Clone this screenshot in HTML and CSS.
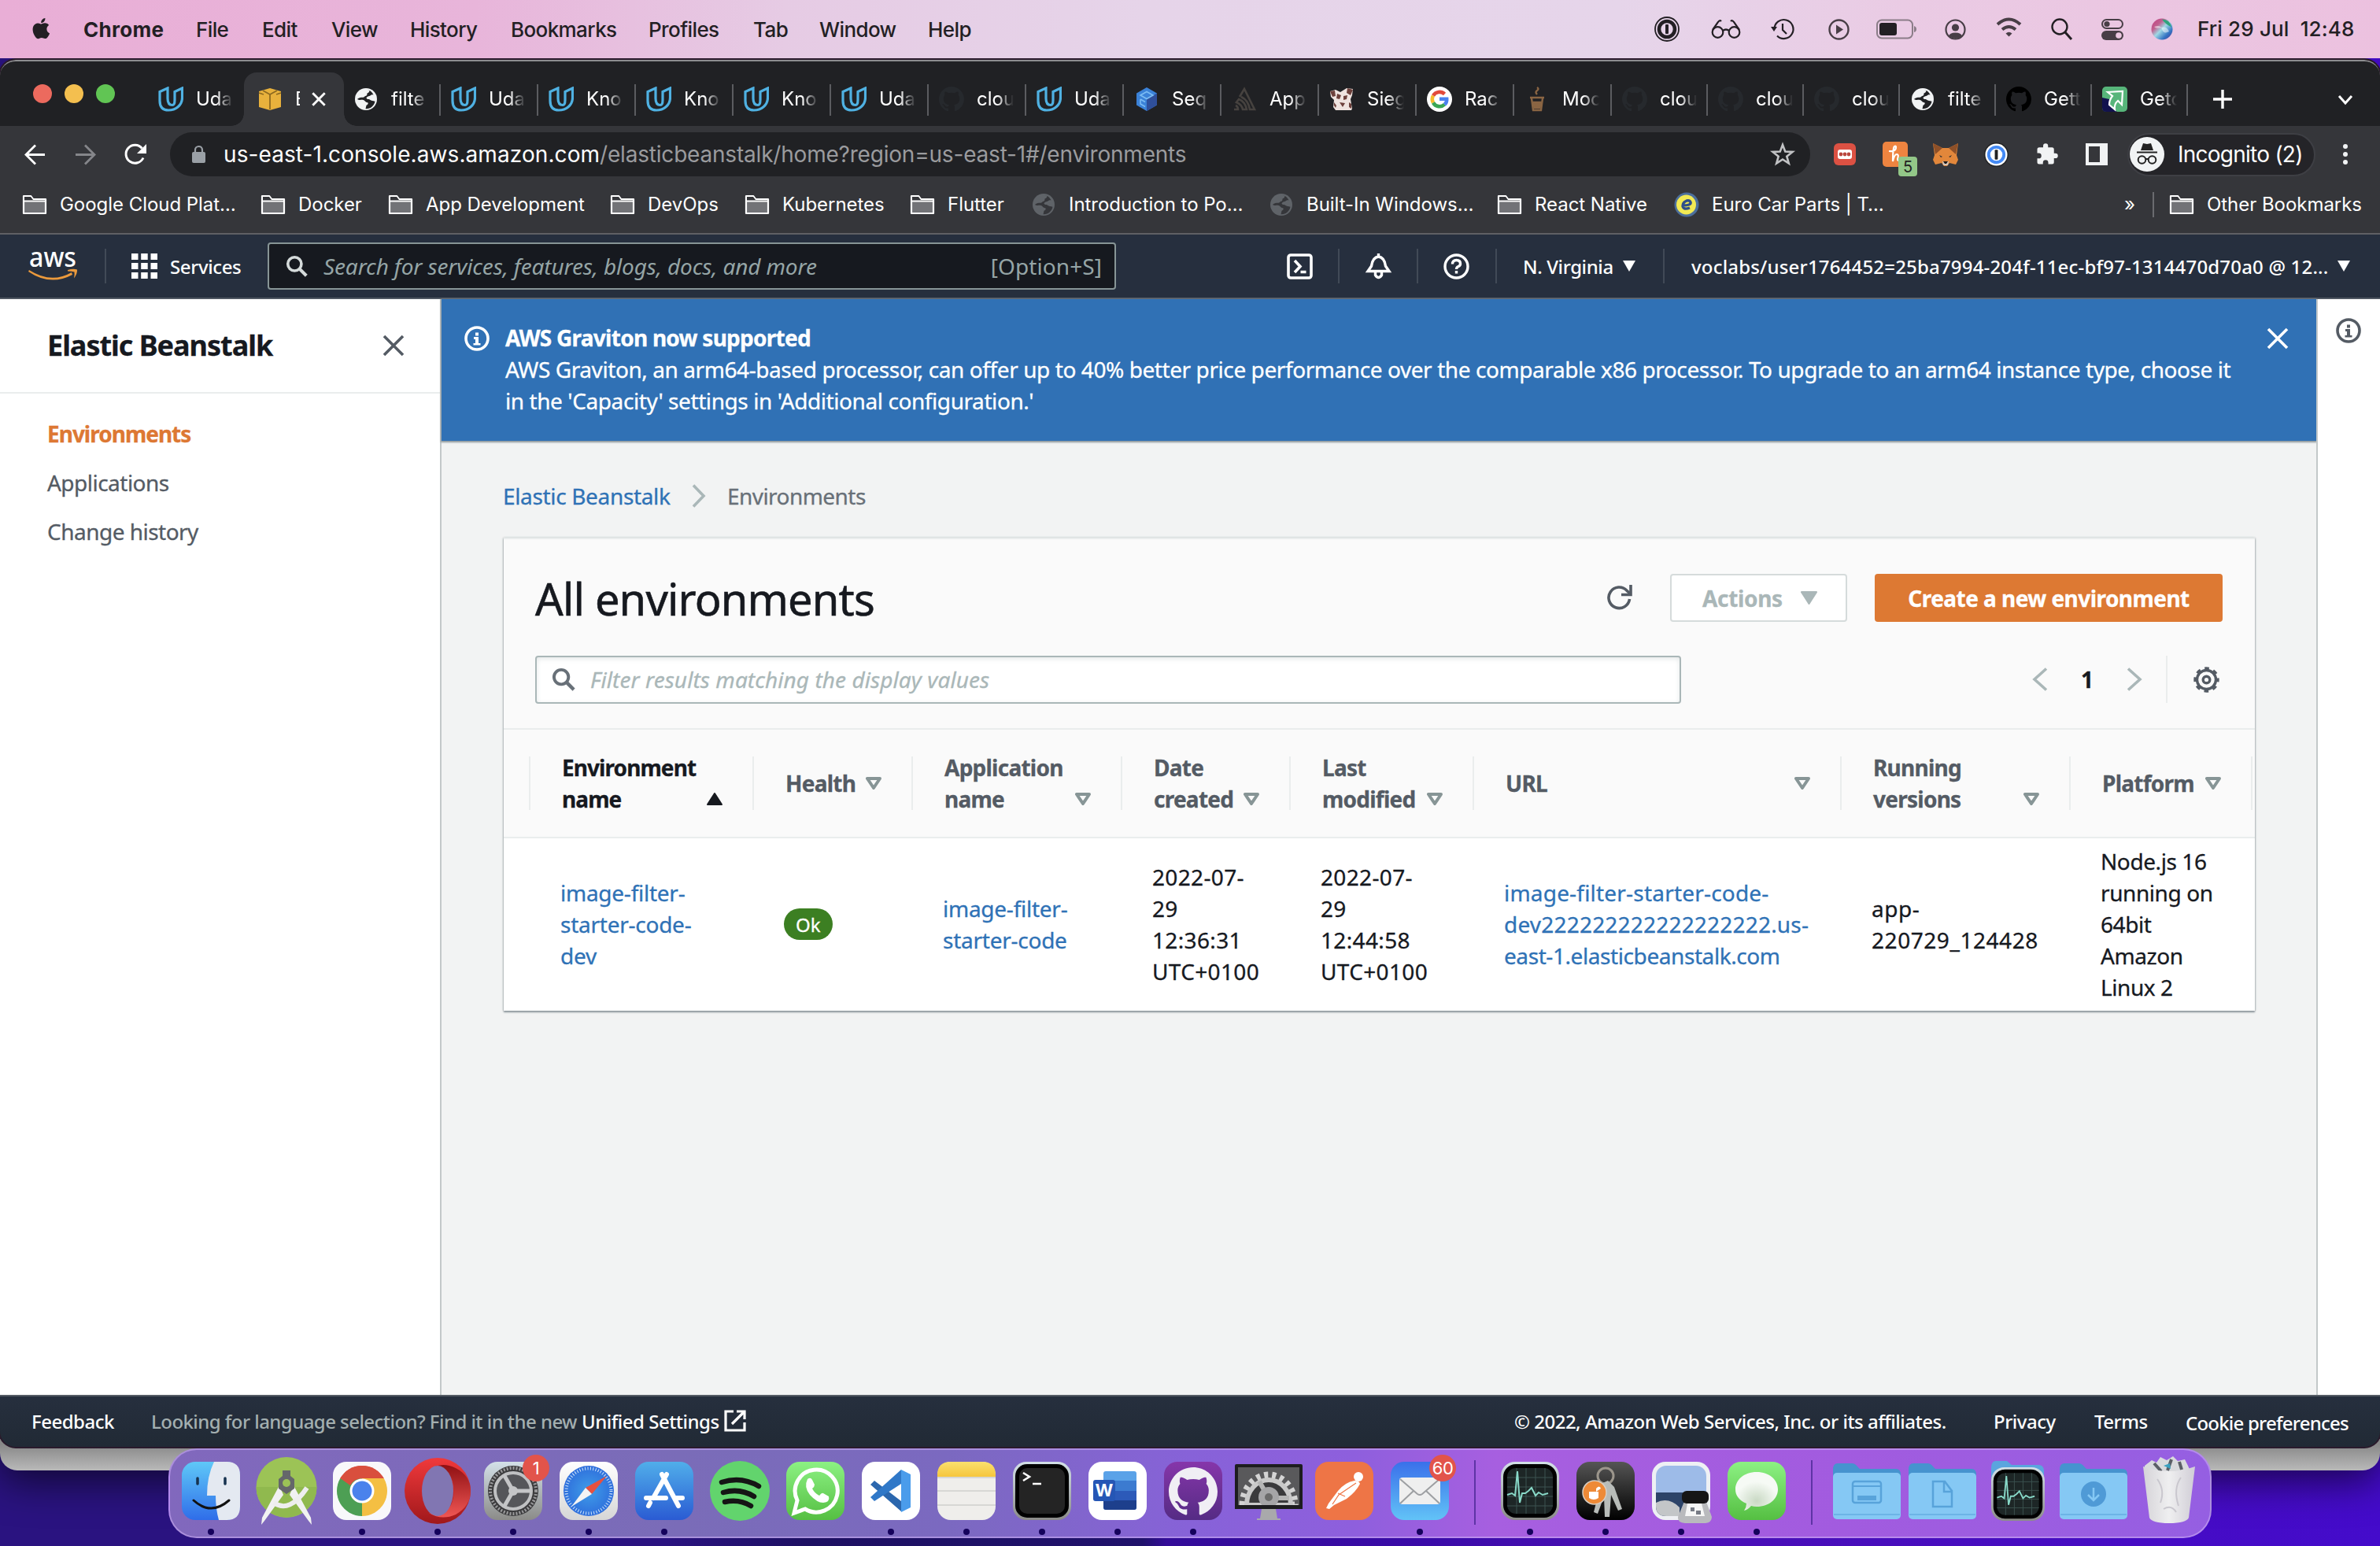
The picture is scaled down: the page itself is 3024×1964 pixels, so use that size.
FILE: index.html
```html
<!DOCTYPE html>
<html lang="en">
<head>
<meta charset="utf-8">
<title>Elastic Beanstalk - Environments</title>
<link rel="stylesheet" href="styles.css">
</head>
<body>
<svg class="sprite" width="0" height="0">
  <defs>
    <linearGradient id="g-finder" x1="0" y1="0" x2="0" y2="1"><stop offset="0" stop-color="#5fc8f8"/><stop offset="1" stop-color="#2f6de9"/></linearGradient>
    <linearGradient id="g-white" x1="0" y1="0" x2="0" y2="1"><stop offset="0" stop-color="#fff"/><stop offset="1" stop-color="#d6d6d6"/></linearGradient>
    <linearGradient id="g-opera" x1="0" y1="0" x2="0" y2="1"><stop offset="0" stop-color="#f0393b"/><stop offset="1" stop-color="#a0181b"/></linearGradient>
    <linearGradient id="g-opera2" x1="0" y1="0" x2="0" y2="1"><stop offset="0" stop-color="#8f1013"/><stop offset="1" stop-color="#f05654"/></linearGradient>
    <linearGradient id="g-pref" x1="0" y1="0" x2="0" y2="1"><stop offset="0" stop-color="#d3e0e8"/><stop offset="1" stop-color="#8b8b88"/></linearGradient>
    <linearGradient id="g-blue" x1="0" y1="0" x2="0" y2="1"><stop offset="0" stop-color="#50aeea"/><stop offset="1" stop-color="#2a5bd3"/></linearGradient>
    <linearGradient id="g-green" x1="0" y1="0" x2="0" y2="1"><stop offset="0" stop-color="#8cf183"/><stop offset="1" stop-color="#55bf42"/></linearGradient>
    <linearGradient id="g-note" x1="0" y1="0" x2="0" y2="1"><stop offset="0" stop-color="#fae06e"/><stop offset="1" stop-color="#f6c63c"/></linearGradient>
    <linearGradient id="g-gh" x1="0" y1="0" x2="0" y2="1"><stop offset="0" stop-color="#8636aa"/><stop offset="1" stop-color="#552b84"/></linearGradient>
    <linearGradient id="g-mail" x1="0" y1="0" x2="0" y2="1"><stop offset="0" stop-color="#3a70ea"/><stop offset="1" stop-color="#62c3f7"/></linearGradient>
    <linearGradient id="g-dark" x1="0" y1="0" x2="0" y2="1"><stop offset="0" stop-color="#555"/><stop offset="1" stop-color="#000"/></linearGradient>
    <linearGradient id="g-siri" x1="0" y1="0" x2="1" y2="1"><stop offset="0" stop-color="#c23d80"/><stop offset=".3" stop-color="#c0608f"/><stop offset=".5" stop-color="#9fd8e4"/><stop offset=".75" stop-color="#3575c4"/><stop offset="1" stop-color="#4a3390"/></linearGradient>
    <linearGradient id="g-bin" x1="0" y1="0" x2="1" y2="0"><stop offset="0" stop-color="#d5d3d8"/><stop offset=".5" stop-color="#efeff0"/><stop offset="1" stop-color="#d0cdd6"/></linearGradient>
    <radialGradient id="g-tile"><stop offset="0" stop-color="#3f9de8"/><stop offset="1" stop-color="#2f6fdc"/></radialGradient>
    <radialGradient id="g-bubble" cx=".5" cy=".75"><stop offset="0" stop-color="#c9d9c4"/><stop offset="1" stop-color="#f6faf5"/></radialGradient>
    <symbol id="udacity" viewBox="0 0 32 32"><path d="M12 2 2 6.500V18C2 26 6 30 13 30 22 30 30.500 24 30.500 14V2L21 6.500V17C21 21 20 23.500 18 23.500 14 23.500 12 20 12 15Z" fill="none" stroke="#4fb1e2" stroke-width="3.200"/></symbol>
    <symbol id="github" viewBox="0 0 16 16"><path fill="currentColor" d="M8 0C3.580 0 0 3.580 0 8c0 3.540 2.290 6.530 5.470 7.590.4.070.55-.17.55-.38 0-.19-.01-.82-.01-1.490-2.010.37-2.530-.49-2.690-.94-.09-.23-.48-.94-.82-1.130-.28-.15-.68-.52-.01-.53.63-.01 1.080.58 1.230.82.72 1.210 1.870.87 2.330.66.07-.52.28-.87.51-1.070-1.780-.2-3.640-.89-3.640-3.950 0-.87.31-1.590.82-2.150-.08-.2-.36-1.020.08-2.120 0 0 .67-.21 2.200.82.64-.18 1.320-.27 2-.27s1.360.09 2 .27c1.530-1.040 2.200-.82 2.200-.82.44 1.100.16 1.920.08 2.120.51.56.82 1.270.82 2.150 0 3.070-1.870 3.750-3.650 3.950.29.25.54.73.54 1.480 0 1.070-.01 1.930-.01 2.200 0 .21.15.46.55.38A8.010 8.010 0 0016 8c0-4.420-3.580-8-8-8z"/></symbol>
    <symbol id="globe" viewBox="0 0 32 32"><circle cx="16" cy="16" r="14" fill="currentColor"/><path class="land" d="M17 4.500c1.500 0 2.500.3 3.500.8-.5 2-1.500 2.700-3 3.200 0 2-.5 3.500-2.500 3.500-1 1.500-3 2-5 1.800-2 .2-3.500.8-5 2.200 2.500 1.600 5 .5 7.500 1 2.500.5 2.500 3 5.500 3.200 1.500.5.500 3-1.500 3.500l-1 4.500c6 .5 11-4 12-9.500-3-1-4.500-.5-6.500-2-1.500-1.500-4 0-4.500-2.500 1.500-2.500 4-1.500 6-3.500 1-.5 2-.5 3-.2C24 7 21 4 17 4.500Z"/></symbol>
    <symbol id="folder" viewBox="0 0 32 26"><path d="M2 24V2h9l3 4h16v18Z" fill="#727377" stroke="#fff" stroke-width="2.200" stroke-linejoin="round"/><path d="M3 3h8l3 4h15v1H3Z" fill="#35363a"/><path d="M2 8.500h28" stroke="#fff" stroke-width="2"/></symbol>
    <symbol id="search" viewBox="0 0 32 32"><circle cx="12.500" cy="12.500" r="9.500" fill="none" stroke="currentColor" stroke-width="4"/><path d="M19 19l10 10" stroke="currentColor" stroke-width="4.500"/></symbol>
    <symbol id="down" viewBox="0 0 20 16"><path d="M1 1h18L10 15Z" fill="currentColor" stroke="currentColor" stroke-width="2" stroke-linejoin="round"/></symbol>
    <symbol id="sort" viewBox="0 0 20 16"><path d="M2 2h16L10 14Z" fill="none" stroke="currentColor" stroke-width="4" stroke-linejoin="round"/></symbol>
    <symbol id="close" viewBox="0 0 28 28"><path d="M2 2l24 24M26 2 2 26" stroke="currentColor" stroke-width="3.600"/></symbol>
    <symbol id="info" viewBox="0 0 32 32"><circle cx="16" cy="16" r="14" fill="none" stroke="currentColor" stroke-width="3.600"/><path d="M14 8.500h4v4h-4zM12 14h6v8h2.500v2.500h-9V22H14v-5h-2z" fill="currentColor"/></symbol>
    <symbol id="onep" viewBox="0 0 32 32"><circle cx="16" cy="16" r="15" fill="none" stroke="#231f24" stroke-width="1.800"/><circle cx="16" cy="16" r="10" fill="none" stroke="#231f24" stroke-width="4.600"/><rect x="14" y="10" width="4" height="12" rx="1" fill="#231f24"/></symbol>
    <symbol id="activity" viewBox="0 0 74 74"><rect width="74" height="74" rx="18" fill="url(#g-pref)"/><rect x="3" y="3" width="68" height="68" rx="16" fill="#000"/><rect x="8" y="8" width="58" height="58" rx="11" fill="#1d2626"/><path d="M8 20h58M8 32h58M8 44h58M8 56h58M20 8v58M32 8v58M44 8v58M56 8v58" stroke="#3c5350" stroke-width="1"/><path d="M8 42l6-2 4 3 3-31 3 40 3-12 4 0 4-3 4-4 5 10 4-4 5 3 7-2" fill="none" stroke="#88d9c8" stroke-width="2"/></symbol>
    <symbol id="dir" viewBox="0 0 86 74"><path d="M0 10Q0 2 6 2H24Q28 2 31 6L34 9H80Q86 9 86 16V40H0Z" fill="#4693cf"/><rect y="14" width="86" height="59" rx="5" fill="#85c8f4"/><path d="M1 67h84" stroke="#64aee2" stroke-width="1.500"/></symbol>
  </defs>
</svg>

<div class="desktop">
  <div class="back-window"></div>

  <header class="menubar">
    <svg width="27" height="34" viewBox="0 0 27 34"><path fill="#231f24" d="M22.400 17.900c0-3.300 2.700-4.900 2.800-5-1.500-2.200-3.900-2.500-4.800-2.600-2-.2-4 1.200-5 1.200s-2.600-1.200-4.300-1.100c-2.200 0-4.300 1.300-5.400 3.300-2.300 4-.6 9.900 1.700 13.200 1.100 1.600 2.400 3.400 4.200 3.300 1.700-.1 2.300-1.100 4.300-1.100s2.600 1.100 4.400 1c1.800 0 2.900-1.600 4-3.200 1.300-1.800 1.800-3.600 1.800-3.700 0 0-3.700-1.400-3.700-5.300ZM19.100 8.200c.9-1.100 1.500-2.600 1.300-4.200-1.300.1-2.900.9-3.800 2-.8.9-1.600 2.500-1.400 4 1.500.1 3-.7 3.900-1.800Z" transform="translate(-3 -1)"/></svg>
    <b>Chrome</b><span>File</span><span>Edit</span><span>View</span><span>History</span><span>Bookmarks</span><span>Profiles</span><span>Tab</span><span>Window</span><span>Help</span>
    <svg width="32" height="32"><use href="#onep"/></svg>
    <svg width="38" height="26" viewBox="0 0 38 26" fill="none" stroke="#231f24" stroke-width="2.200"><circle cx="8.500" cy="17" r="6.800"/><circle cx="29.500" cy="17" r="6.800"/><path d="M15 15q4-3 8 0M2 14 9 4q2-3 4-1M36 14 29 4q-2-3-4-1"/></svg>
    <svg width="29" height="28" viewBox="0 0 29 28" fill="none" stroke="#231f24" stroke-width="2.200"><path d="M4.500 14a12 12 0 1 1 3.500 8.500M15 7v8l5 5"/><path d="M0 11h8l-4 6Z" fill="#231f24" stroke="none"/></svg>
    <svg width="27" height="27" viewBox="0 0 27 27"><circle cx="13.500" cy="13.500" r="12" fill="none" stroke="#483e46" stroke-width="2.400"/><path d="M10 7.500v12l9-6Z" fill="#483e46"/></svg>
    <svg width="52" height="26" viewBox="0 0 52 26"><rect x="1" y="1.500" width="45" height="23" rx="6" fill="none" stroke="#8b7d88" stroke-width="2"/><rect x="4" y="5" width="22" height="16" rx="3" fill="#231f24"/><path d="M48 9q3 1 3 4t-3 4Z" fill="#8b7d88"/></svg>
    <svg width="27" height="27" viewBox="0 0 27 27"><circle cx="13.500" cy="13.500" r="12" fill="none" stroke="#483e46" stroke-width="2.200"/><circle cx="13.500" cy="11" r="4.600" fill="#483e46"/><path d="M5 22q1-4.500 8.500-4.500T22 22q-8 6-17 0Z" fill="#483e46"/></svg>
    <svg class="up" width="33" height="25" viewBox="0 0 33 25" fill="none" stroke="#483e46" stroke-width="4"><path d="M2 9Q16.500-4 31 9M8 15.500q8.500-7 17 0"/><path d="M12.500 20.500q4-3.500 8 0l-4 4Z" fill="#483e46" stroke="none"/></svg>
    <svg width="27" height="28" viewBox="0 0 27 28"><circle cx="11" cy="11" r="9.500" fill="none" stroke="#231f24" stroke-width="2.400"/><path d="M18 18l8 9" stroke="#231f24" stroke-width="3"/></svg>
    <svg width="28" height="27" viewBox="0 0 28 27"><rect x="1" y="1" width="26" height="11" rx="5.500" fill="none" stroke="#483e46" stroke-width="2"/><circle cx="7" cy="6.500" r="3.600" fill="#483e46"/><rect y="15" width="28" height="12" rx="6" fill="#483e46"/><circle cx="22" cy="21" r="3.800" fill="#ecc8e1"/></svg>
    <svg width="28" height="28" viewBox="0 0 28 28"><circle cx="14" cy="14" r="13.500" fill="url(#g-siri)"/><path d="M14 1.500q10 0 12 10-8-4-12-10Z" fill="#2fa37c"/><path d="M4 11q8-3 10 3 2 7 9 3-3-7-10-5T4 11Z" fill="#fff" opacity=".5"/></svg>
    <span class="clock">Fri 29 Jul  12:48</span>
  </header>

  <main class="window">
    <div class="tabstrip">
      <div class="lights"><i class="red"></i><i class="amber"></i><i class="green"></i></div>
      <div class="tabs">
        <div class="tab plain"><svg><use href="#udacity"/></svg><span>Uda</span></div>
        <div class="tab active"><svg viewBox="0 0 32 32"><path d="M2 6 16 2l14 4v20l-14 4L2 26Z" fill="#e8b13c"/><path d="M16 10v19M7 5l9 5 9-5M2 8l6 2M30 8l-6 2" stroke="#8e6a20" stroke-width="1.800" fill="none"/></svg><span>E</span><svg class="x" viewBox="0 0 20 20"><path d="M3 3l14 14M17 3 3 17" stroke="#fff" stroke-width="2.600"/></svg></div>
        <div class="tab white"><svg><use href="#globe"/></svg><span>filte</span></div>
        <div class="tab"><svg><use href="#udacity"/></svg><span>Uda</span></div>
        <div class="tab"><svg><use href="#udacity"/></svg><span>Kno</span></div>
        <div class="tab"><svg><use href="#udacity"/></svg><span>Kno</span></div>
        <div class="tab"><svg><use href="#udacity"/></svg><span>Kno</span></div>
        <div class="tab"><svg><use href="#udacity"/></svg><span>Uda</span></div>
        <div class="tab dim"><svg><use href="#github"/></svg><span>clou</span></div>
        <div class="tab"><svg><use href="#udacity"/></svg><span>Uda</span></div>
        <div class="tab"><svg viewBox="0 0 32 32"><path d="M16 1 29 8.500v15L16 31 3 23.500v-15Z" fill="#3b82d8"/><path d="M16 16l13-7.500v15L16 31Z" fill="#2f4f9a"/><path d="M8 11l8-4.500L24 11l-8 4.500zM8 16v6l6 3.500M8 16l6 3.500" fill="none" stroke="#7cbcf3" stroke-width="1.600"/></svg><span>Seq</span></div>
        <div class="tab"><svg viewBox="0 0 32 32" fill="none" stroke="#46423f" stroke-width="2.600"><path d="M10 13 16 3l13 26h-6Q21 17 12 13M3 29h5q0-4-3-5M6 20q7 3 8 9h5Q17 19 9 16Z"/></svg><span>App</span></div>
        <div class="tab"><svg viewBox="0 0 32 32"><path d="M1 6l7-2 6 3 8-5 8 1-1 8-2 5 2 12-1 2H8L5 26l1-9-4-4Z" fill="#efe3df"/><path d="M1 6l6-1 1 7-4 1ZM23 2l7 2-3 7-5-3ZM10 9l5 2-2 5-4-1ZM18 12l5-1-1 5-4 1ZM13 20l7 1-3 5ZM25 20l3 2v6l-3-2ZM6 20l3 4-1 3-2-3Z" fill="#6d403b"/></svg><span>Sieg</span></div>
        <div class="tab"><svg viewBox="0 0 32 32"><circle cx="16" cy="16" r="16" fill="#fff"/><g fill="none" stroke-width="4.600"><path d="M22.500 9.500A9.300 9.300 0 0 0 8 11.500" stroke="#e24a3b"/><path d="M8 11.500a9.300 9.300 0 0 0 0 9" stroke="#f5bb2d"/><path d="M8 20.500a9.300 9.300 0 0 0 14.500 2.200" stroke="#3aa655"/><path d="M22.500 22.700Q25.500 20 25.200 15.800H16" stroke="#4a80ee"/></g></svg><span>Rac</span></div>
        <div class="tab"><svg viewBox="0 0 32 32" fill="none" stroke="#8a6543" stroke-width="2.400"><path d="M7 14h18M9 15l2 15h10l2-15M16 10q-3-3 0-5t0-4"/><path d="M11.500 20h9l-1 7h-7Z" fill="#8a6543"/></svg><span>Moc</span></div>
        <div class="tab dim"><svg><use href="#github"/></svg><span>clou</span></div>
        <div class="tab dim"><svg><use href="#github"/></svg><span>clou</span></div>
        <div class="tab dim"><svg><use href="#github"/></svg><span>clou</span></div>
        <div class="tab white"><svg><use href="#globe"/></svg><span>filte</span></div>
        <div class="tab black"><svg><use href="#github"/></svg><span>Gett</span></div>
        <div class="tab"><svg viewBox="0 0 32 32"><rect width="32" height="32" rx="5" fill="#57b57a"/><path d="M0 14l9 2 2 10 8 6H5q-5 0-5-5Z" fill="#12124e"/><path d="M7 7l19-1-1 17-5-5q-5 4-4 11l-7-6q0-6 4-11Z" fill="#57b57a" stroke="#fff" stroke-width="2.200"/></svg><span>Getc</span></div>
      </div>
      <svg class="plus" viewBox="0 0 26 26"><path d="M13 1v24M1 13h24" stroke="#fff" stroke-width="3.400"/></svg>
      <svg class="caret" viewBox="0 0 20 14"><path d="M2 2l8 9 8-9" fill="none" stroke="#fff" stroke-width="3"/></svg>
    </div>

    <div class="toolbar">
      <svg width="27" height="27" viewBox="0 0 27 27" fill="none" stroke="#fff" stroke-width="2.800"><path d="M26 13.500H2M14 1.500l-12 12 12 12"/></svg>
      <svg width="27" height="27" viewBox="0 0 27 27" fill="none" stroke="#85868a" stroke-width="2.800"><path d="M1 13.500h24M13 1.500l12 12-12 12"/></svg>
      <svg width="28" height="28" viewBox="0 0 28 28"><path d="M24 18.500A11.500 11.500 0 1 1 22.500 6.500" fill="none" stroke="#fff" stroke-width="3"/><path d="M28 1v12H16Z" fill="#fff"/></svg>
      <div class="omnibox">
        <svg width="17" height="22" viewBox="0 0 17 22"><rect y="8" width="17" height="14" rx="2" fill="#9aa0a6"/><path d="M4 9V5.500a4.500 4.500 0 0 1 9 0V9" fill="none" stroke="#9aa0a6" stroke-width="2.200"/></svg>
        <p><b>us-east-1.console.aws.amazon.com</b><span>/elasticbeanstalk/home?region=us-east-1#/environments</span></p>
        <svg width="30" height="30" viewBox="0 0 30 30"><path d="M15 3l3.300 8.600 9.200.4-7.200 5.700 2.500 8.900L15 21.500l-7.800 5.100 2.500-8.900L2.500 12l9.200-.4Z" fill="none" stroke="#c2c3c5" stroke-width="2.600"/></svg>
      </div>
      <i></i>
      <svg width="28" height="28" viewBox="0 0 28 28"><rect width="28" height="28" rx="6" fill="#dc5143"/><rect x="5" y="8" width="18" height="12" rx="3" fill="#fff"/><circle cx="9" cy="14" r="2.400" fill="#b9473e"/><circle cx="14" cy="14" r="2.400" fill="#b9473e"/><circle cx="19" cy="14" r="2.400" fill="#b9473e"/></svg>
      <div class="honey"><svg width="32" height="32" viewBox="0 0 32 32"><rect width="32" height="32" rx="5" fill="#ee8440"/><path d="M8 12q9 1 9-5 0-2-2-1-2 2-2 19 2-9 5-9t1 6q0 3 3 1" fill="none" stroke="#fff" stroke-width="2.200"/></svg><em>5</em></div>
      <svg width="32" height="30" viewBox="0 0 32 30"><path d="M0 1l12 6h8L32 1l-2 15 2 6-3 6-8-2-3 4h-4l-3-4-8 2-3-6 2-6Z" fill="#e2873b"/><path d="M0 1l12 6-9 8ZM32 1 20 7l9 8Z" fill="#8e5028"/><path d="M12 24h8l-1 5h-6Z" fill="#d6c5b8"/><path d="M13 24h6l-2 3h-2Z" fill="#1e1a1a"/><path d="M8 16l4 2-2 1ZM24 16l-4 2 2 1Z" fill="#333"/></svg>
      <svg width="31" height="31" viewBox="0 0 32 32"><circle cx="16" cy="16" r="16" fill="#222"/><circle cx="16" cy="16" r="14.500" fill="#fff"/><circle cx="16" cy="16" r="10" fill="#fff" stroke="#448af5" stroke-width="4"/><rect x="14" y="9.500" width="4" height="13" rx="1" fill="#222"/></svg>
      <svg width="30" height="30" viewBox="0 0 24 24"><path d="M20.500 11H19V7a2 2 0 0 0-2-2h-4V3.500a2.500 2.500 0 0 0-5 0V5H4a2 2 0 0 0-2 2v3.800h1.500a2.700 2.700 0 0 1 0 5.400H2V20a2 2 0 0 0 2 2h3.800v-1.500a2.700 2.700 0 0 1 5.400 0V22H17a2 2 0 0 0 2-2v-4h1.500a2.500 2.500 0 0 0 0-5Z" fill="#f1f3f4"/></svg>
      <svg width="28" height="28" viewBox="0 0 28 28"><rect x="2" y="2" width="24" height="24" fill="none" stroke="#f1f3f4" stroke-width="4"/><rect x="18" y="2" width="8" height="24" fill="#f1f3f4"/></svg>
      <div class="incognito"><svg width="44" height="44" viewBox="0 0 44 44"><circle cx="22" cy="22" r="22" fill="#f1f3f4"/><path d="M14 17l3-9 5 1 5-1 3 9ZM9 18.500h26v2H9Z" fill="#222"/><g fill="none" stroke="#222" stroke-width="2"><circle cx="15.500" cy="29" r="4.800"/><circle cx="28.500" cy="29" r="4.800"/><path d="M20 28h4"/></g></svg><span>Incognito (2)</span></div>
      <div class="dots"><i></i><i></i><i></i></div>
    </div>

    <div class="bookmarks">
      <div><svg><use href="#folder"/></svg>Google Cloud Plat…</div>
      <div><svg><use href="#folder"/></svg>Docker</div>
      <div><svg><use href="#folder"/></svg>App Development</div>
      <div><svg><use href="#folder"/></svg>DevOps</div>
      <div><svg><use href="#folder"/></svg>Kubernetes</div>
      <div><svg><use href="#folder"/></svg>Flutter</div>
      <div class="site"><svg><use href="#globe"/></svg>Introduction to Po…</div>
      <div class="site"><svg><use href="#globe"/></svg>Built-In Windows…</div>
      <div><svg><use href="#folder"/></svg>React Native</div>
      <div class="site"><svg viewBox="0 0 32 32"><circle cx="16" cy="16" r="15.500" fill="#4c6f9c"/><circle cx="15.500" cy="16" r="12.500" fill="#f2ea54"/><path d="M11 17q11 0 10-4-1-3-5-2-5 2-5 7 1 5 9 2" fill="none" stroke="#2f4f8a" stroke-width="3.400"/></svg>Euro Car Parts | T…</div>
      <span>»</span>
      <hr>
      <div><svg><use href="#folder"/></svg>Other Bookmarks</div>
    </div>

    <nav class="awsnav">
      <svg width="64" height="42" viewBox="0 0 64 42"><text x="1" y="22" textLength="60" lengthAdjust="spacingAndGlyphs" class="aws">aws</text><path d="M1 26q28 18 54 3l1 3Q28 47 0 28Z" fill="#eb9a3c"/><path d="M50 26q7-2 12-.5.500 5-4 11 1-5 .5-8-4-1-8.500-1Z" fill="#eb9a3c"/></svg>
      <hr>
      <svg width="33" height="32" viewBox="0 0 33 32" fill="#fff"><path d="M0 0h8.500v8H0zM12.200 0h8.500v8h-8.500zM24.500 0H33v8h-8.500zM0 12h8.500v8H0zM12.200 12h8.500v8h-8.500zM24.500 12H33v8h-8.500zM0 24h8.500v8H0zM12.200 24h8.500v8h-8.500zM24.500 24H33v8h-8.500z"/></svg>
      <span>Services</span>
      <div class="navsearch"><svg width="29" height="29"><use href="#search"/></svg><em>Search for services, features, blogs, docs, and more</em><kbd>[Option+S]</kbd></div>
      <i></i>
      <svg width="33" height="33" viewBox="0 0 33 33" fill="none" stroke="#fff" stroke-width="3.600"><rect x="2" y="2" width="29" height="29" rx="3"/><path d="M10 9l7 7.500-7 7.500M17.500 23.500h7"/></svg>
      <hr>
      <svg width="33" height="33" viewBox="0 0 33 33" fill="none" stroke="#fff" stroke-width="3.400"><path d="M3 22.500h27L25.500 16Q24 5 16.500 4 9 5 7.500 16ZM16.500 0v4"/><path d="M12.500 24v3.500q4 6 8 0V24"/></svg>
      <hr>
      <svg width="33" height="33" viewBox="0 0 33 33" fill="none" stroke="#fff" stroke-width="3.400"><circle cx="16.500" cy="16.500" r="14.500"/><path d="M11.500 13.500q0-5 5-5t5 4.500q0 2.500-2.500 3.500t-2.500 3.500M16.500 22v3.500"/></svg>
      <hr>
      <span>N. Virginia</span>
      <svg width="16" height="14" viewBox="0 0 16 14"><path d="M0 0h16L8 14Z" fill="#fff"/></svg>
      <hr>
      <span class="acct">voclabs/user1764452=25ba7994-204f-11ec-bf97-1314470d70a0 @ 12...</span>
      <svg width="16" height="14" viewBox="0 0 16 14"><path d="M0 0h16L8 14Z" fill="#fff"/></svg>
    </nav>

    <div class="console">
      <aside class="side">
        <div class="side-head"><h2>Elastic Beanstalk</h2><svg width="28" height="28"><use href="#close"/></svg></div>
        <ul><li class="on">Environments</li><li>Applications</li><li>Change history</li></ul>
      </aside>

      <section class="content">
        <div class="flash">
          <svg width="32" height="32"><use href="#info"/></svg>
          <div><b>AWS Graviton now supported</b><p>AWS Graviton, an arm64-based processor, can offer up to 40% better price performance over the comparable x86 processor. To upgrade to an arm64 instance type, choose it<br>in the 'Capacity' settings in 'Additional configuration.'</p></div>
          <svg width="28" height="28"><use href="#close"/></svg>
        </div>
        <div class="crumbs"><a>Elastic Beanstalk</a><svg width="18" height="30" viewBox="0 0 18 30"><path d="M2 1.500 15 15 2 28.500" fill="none" stroke="#aab7b8" stroke-width="3.600"/></svg><span>Environments</span></div>
        <div class="card">
          <div class="card-head">
            <h1>All environments</h1>
            <svg width="33" height="33" viewBox="0 0 33 33"><path d="M29.500 18A13.300 13.300 0 1 1 26 7.200L30 11" fill="none" stroke="#545b64" stroke-width="3.600"/><path d="M31 0v12.500H19" fill="none" stroke="#545b64" stroke-width="3.600"/></svg>
            <button class="actions">Actions<svg width="21" height="17"><use href="#down"/></svg></button>
            <button class="create">Create a new environment</button>
          </div>
          <div class="filter-row">
            <div class="filter"><svg width="31" height="31"><use href="#search"/></svg><em>Filter results matching the display values</em></div>
            <div class="pager">
              <svg width="20" height="30" viewBox="0 0 20 30"><path d="M18 1.500 3 15l15 13.500" fill="none" stroke="#aab7b8" stroke-width="3.600"/></svg>
              <b>1</b>
              <svg width="20" height="30" viewBox="0 0 20 30"><path d="M2 1.500 17 15 2 28.500" fill="none" stroke="#aab7b8" stroke-width="3.600"/></svg>
              <hr>
              <svg width="33" height="33" viewBox="0 0 33 33" fill="none" stroke="#545b64"><circle cx="16.500" cy="16.500" r="12" stroke-width="3.400"/><circle cx="16.500" cy="16.500" r="14.500" stroke-width="3.400" stroke-dasharray="5.700 5.700" stroke-dashoffset="2.850"/><circle cx="16.500" cy="16.500" r="4.300" stroke-width="3.400"/></svg>
            </div>
          </div>
          <div class="grid head">
            <div></div>
            <div class="sorted"><span>Environment name</span><svg class="asc"><use href="#down"/></svg></div>
            <div><span>Health</span><svg><use href="#sort"/></svg></div>
            <div><span>Application name</span><svg><use href="#sort"/></svg></div>
            <div><span>Date created</span><svg><use href="#sort"/></svg></div>
            <div><span>Last modified</span><svg><use href="#sort"/></svg></div>
            <div><span>URL</span><svg><use href="#sort"/></svg></div>
            <div><span>Running versions</span><svg><use href="#sort"/></svg></div>
            <div><span>Platform</span><svg><use href="#sort"/></svg></div>
          </div>
          <div class="grid row">
            <div></div>
            <div><a>image-filter-<br>starter-code-<br>dev</a></div>
            <div><mark>Ok</mark></div>
            <div><a>image-filter-<br>starter-code</a></div>
            <div class="num">2022-07-<br>29<br>12:36:31<br>UTC+0100</div>
            <div class="num">2022-07-<br>29<br>12:44:58<br>UTC+0100</div>
            <div><a><span class="wide">image-filter-starter-code-</span><br><span class="wide">dev222222222222222222.us-</span><br>east-1.elasticbeanstalk.com</a></div>
            <div class="ver">app-<br>220729_124428</div>
            <div>Node.js 16<br>running on<br>64bit<br>Amazon<br>Linux 2</div>
          </div>
        </div>
      </section>

      <aside class="help"><svg width="32" height="32"><use href="#info"/></svg></aside>
    </div>

    <footer class="foot">
      <span>Feedback</span><span class="mute">Looking for language selection? Find it in the new</span><span>Unified Settings</span>
      <svg width="28" height="28" viewBox="0 0 28 28" fill="none" stroke="#fff" stroke-width="3.200"><path d="M12 2H2v24h24V16M16 2h10v10M26 2 10 18"/></svg>
      <span>© 2022, Amazon Web Services, Inc. or its affiliates.</span><span>Privacy</span><span>Terms</span><span class="cookie">Cookie preferences</span>
    </footer>
  </main>

  <div class="dock">
    <div class="app run"><svg viewBox="0 0 74 74"><rect width="74" height="74" rx="17" fill="url(#g-finder)"/><path d="M41 0h16q17 0 17 17v40q0 17-17 17H47q-4-14-4-31H32Q32 18 41 0Z" fill="#e4e9f1"/><path d="M20 21v7M55 21v7" stroke="#16324f" stroke-width="3.500" stroke-linecap="round"/><path d="M15 49q22 20 45 0" fill="none" stroke="#111" stroke-width="3" stroke-linecap="round"/></svg></div>
    <div class="app"><svg viewBox="0 0 74 74"><circle cx="37" cy="32.500" r="38.500" fill="#9cc356"/><path d="M-1.500 32h77a38.500 38.500 0 0 1-77 0Z" fill="#90b94e"/><path d="M33 42 9 75l-4 5 1-9 22-41ZM41 42l24 33 4 5-1-9-22-41Z" fill="#f1f1f1"/><path d="M21 52q20 14 42-19" fill="none" stroke="#eee" stroke-width="6"/><path d="M32 11h10v7l5 4v12l-10 7-10-7V22l5-4Z" fill="#65676a"/><circle cx="37" cy="27" r="5" fill="#9cc356"/></svg></div>
    <div class="app run"><svg viewBox="0 0 74 74"><rect width="74" height="74" rx="17" fill="#f8f8fa"/><path d="M37 37 9.300 21A32 32 0 0 1 64.700 21Z" fill="#d94f3d"/><path d="M37 37V69A32 32 0 0 1 9.300 21Z" fill="#4d9f54"/><path d="M37 37 64.700 21A32 32 0 0 1 37 69Z" fill="#f4bf43"/><path d="M37 21h27.700L51 45Z" fill="#f4bf43"/><path d="M37 21H9.300L23 45Z" fill="#4d9f54"/><path d="M9.300 21A32 32 0 0 1 64.700 21H37Q26 22 22 30Z" fill="#d94f3d"/><circle cx="37" cy="37" r="15.500" fill="#fff"/><circle cx="37" cy="37" r="12.500" fill="#4a82ec"/></svg></div>
    <div class="app run"><svg viewBox="0 0 74 74"><ellipse cx="37" cy="37" rx="42" ry="42" fill="url(#g-opera)"/><path d="M26 10Q42-1 60 8 79 18 79 37T60 67Q42 75 26 65 45 68 54 55 62 37 54 20 45 6 26 10Z" fill="url(#g-opera2)"/><ellipse cx="37" cy="37" rx="20" ry="32" fill="#8176b2"/></svg></div>
    <div class="app run"><svg viewBox="0 0 74 74"><rect width="74" height="74" rx="17" fill="url(#g-pref)"/><circle cx="37" cy="37" r="32" fill="#3b3b3d"/><circle cx="37" cy="37" r="29" fill="none" stroke="#9a9a9c" stroke-width="4" stroke-dasharray="2 2"/><circle cx="37" cy="37" r="23" fill="#55565a" stroke="#bfc0c2" stroke-width="4"/><path d="M37 37h23M37 37 25.500 17M37 37 25.500 57" stroke="#c4c5c7" stroke-width="5"/><circle cx="37" cy="37" r="6" fill="#c4c5c7"/></svg><em>1</em></div>
    <div class="app run"><svg viewBox="0 0 74 74"><rect width="74" height="74" rx="17" fill="url(#g-white)"/><circle cx="37" cy="37" r="32" fill="url(#g-tile)"/><circle cx="37" cy="37" r="28.500" fill="none" stroke="#cfe5fa" stroke-width="4" stroke-dasharray="1 2.400"/><path d="M60 18 41 41 33 33Z" fill="#e8503f"/><path d="M15 57 33 33l8 8Z" fill="#f4f4f4"/></svg></div>
    <div class="app run"><svg viewBox="0 0 74 74"><rect width="74" height="74" rx="17" fill="url(#g-blue)"/><path d="M40 16 23 46M34 16l21 40M19 52l-2 4M14 46h25M50 46h10" stroke="#fff" stroke-width="6" stroke-linecap="round"/></svg></div>
    <div class="app"><svg viewBox="0 0 74 74"><circle cx="37" cy="37" r="38" fill="#62d46d"/><path d="M14 26q25-8 47 5M16 39q21-6 39 5M18 51q18-4 33 5" fill="none" stroke="#151515" stroke-width="6.500" stroke-linecap="round"/></svg></div>
    <div class="app"><svg viewBox="0 0 74 74"><rect width="74" height="74" rx="17" fill="url(#g-green)"/><path d="M10 65l4-16a27 27 0 1 1 10 11Z" fill="none" stroke="#fff" stroke-width="5"/><path d="M27 22q4-3 6 1l3 6q0 3-3 5 3 6 9 9 3-4 5-3l7 4q2 7-7 8-8 0-17-10-8-10-3-20Z" fill="#fff"/></svg></div>
    <div class="app run"><svg viewBox="0 0 74 74"><rect width="74" height="74" rx="17" fill="#fff"/><path d="M50 10v53L11 29l5-5 34 26Z" fill="#2b67ae"/><path d="M50 10v18L16 50l-5-5Z" fill="#2f78c8"/><path d="M50 10l12 6v42l-12 6Z" fill="#4a9ceb"/></svg></div>
    <div class="app run"><svg viewBox="0 0 74 74"><rect width="74" height="74" rx="17" fill="#efeeeb"/><path d="M0 19V17Q0 0 17 0H57Q74 0 74 17v2Z" fill="url(#g-note)"/><path d="M0 20h74M0 37h74M0 55h74" stroke="#d0cfcd" stroke-width="1.500"/></svg></div>
    <div class="app run"><svg viewBox="0 0 74 74"><rect width="74" height="74" rx="17" fill="url(#g-pref)"/><rect x="3" y="3" width="68" height="68" rx="15" fill="#000"/><rect x="8" y="8" width="58" height="58" rx="10" fill="#242424"/><path d="M13 14l8 5-8 5M25 28h11" fill="none" stroke="#fff" stroke-width="2.600"/></svg></div>
    <div class="app run"><svg viewBox="0 0 74 74"><rect width="74" height="74" rx="17" fill="#fff"/><rect x="19" y="12" width="42" height="49" rx="3" fill="#5aa2e8"/><path d="M19 24h42v13H19z" fill="#3c7bd0"/><path d="M19 37h42v12H19z" fill="#2c5ab9"/><path d="M19 49h42v9q0 3-3 3H22q-3 0-3-3z" fill="#1d3f8c"/><rect x="6" y="23" width="28" height="27" rx="3" fill="#2556b5"/><text x="20" y="43.500" text-anchor="middle" class="w">W</text></svg></div>
    <div class="app run"><svg viewBox="0 0 74 74"><rect width="74" height="74" rx="17" fill="url(#g-gh)"/><svg x="6" y="7" width="62" height="62" color="#f0eef4"><use href="#github"/></svg></svg></div>
    <div class="app"><svg viewBox="0 0 74 74"><rect x="-6" y="3" width="86" height="57" rx="2" fill="#1d1d1f"/><rect x="-2" y="7" width="78" height="48" fill="#59595b"/><path d="M4 55a33 38 0 0 1 66 0Z" fill="none" stroke="#d4d4d4" stroke-width="9" stroke-dasharray="5 5"/><path d="M9 55a28 32 0 0 1 56 0Z" fill="#3a3a3c" stroke="#c9c9c9" stroke-width="6"/><path d="M37 46 25 25M37 46h26" stroke="#b5b5b5" stroke-width="6"/><circle cx="37" cy="45" r="13" fill="#a5a5a7"/><circle cx="37" cy="45" r="5" fill="#6b6b6b"/><path d="M-6 55h86v5H-6Z" fill="#1d1d1f"/><path d="M28 60h18l2 12h4v2H22v-2h4Z" fill="#a9a9ab"/></svg></div>
    <div class="app"><svg viewBox="0 0 74 74"><rect width="74" height="74" rx="17" fill="#ee7546"/><circle cx="55" cy="19" r="6" fill="#fff"/><path d="M50 24q6 0 7 4-5 10-17 19L24 55l-6 5-4-1 3-6 12-16Q38 26 50 24Z" fill="#fff"/><path d="M52 27 30 42l-8 12M29 40l9 4" stroke="#ee7546" stroke-width="1.200" fill="none"/></svg></div>
    <div class="app run"><svg viewBox="0 0 74 74"><rect width="74" height="74" rx="17" fill="url(#g-mail)"/><rect x="11" y="20" width="52" height="34" rx="4" fill="#efefef"/><path d="M12 22l22 19q3 2 6 0l22-19M12 53l17-16M62 53 45 37" fill="none" stroke="#9d9fa2" stroke-width="2"/></svg><em>60</em></div>
    <hr>
    <div class="app run"><svg><use href="#activity"/></svg></div>
    <div class="app run"><svg viewBox="0 0 74 74"><rect width="74" height="74" rx="17" fill="url(#g-dark)"/><circle cx="37" cy="18" r="10" fill="none" stroke="#9c968c" stroke-width="3"/><path d="M31 28l-9 36 5 2 8-22 1 26h6l2-28 9 20 5-2-10-28-8-8Z" fill="#b8bcb9"/><circle cx="23" cy="39" r="15" fill="#ee8a37" stroke="#d8cfc4" stroke-width="1.500"/><path d="M16 38h12v8q-6 4-12 0ZM25 38v-4q4-5 6 0" fill="#fff"/></svg></div>
    <div class="app run"><svg viewBox="0 0 74 74"><rect width="74" height="74" rx="17" fill="#eef0f4"/><rect x="5" y="5" width="64" height="64" rx="13" fill="#9dbbe8"/><path d="M5 39h64v17q0 13-13 13H18Q5 69 5 56Z" fill="#2c4368"/><path d="M5 52q16-8 30 6v11H18Q5 69 5 56Z" fill="#c3c6c8"/><path d="M42 48h26l8 22q0 7-8 8H42q-10-1-9-8Z" fill="#b9babd"/><path d="M45 53h18l4 16H42Z" fill="#f6f6f6"/><path d="M49 58h5v5h-5zM56 62h6v5h-6z" fill="#777b85"/><rect x="38" y="37" width="34" height="16" rx="6" fill="#161616"/></svg></div>
    <div class="app run"><svg viewBox="0 0 74 74"><rect width="74" height="74" rx="17" fill="url(#g-green)"/><path d="M37 13c16 0 27 10 27 22S53 57 37 57q-4 0-7-1-4 5-9 6 3-4 3-9C15 49 10 43 10 35c0-12 11-22 27-22Z" fill="url(#g-bubble)"/></svg></div>
    <hr>
    <div class="app dirs"><svg viewBox="0 0 86 74"><use href="#dir" width="86" height="74"/><rect x="25" y="25" width="36" height="27" rx="3" fill="none" stroke="#58a3da" stroke-width="2.500"/><path d="M25 31h36" stroke="#58a3da" stroke-width="2"/><rect x="31" y="43" width="24" height="6" fill="#58a3da"/></svg></div>
    <div class="app dirs"><svg viewBox="0 0 86 74"><use href="#dir" width="86" height="74"/><path d="M31 25h15l9 12v20H31ZM45 25v13h10" fill="none" stroke="#58a3da" stroke-width="2.500"/></svg></div>
    <div class="app dirs"><svg viewBox="0 0 86 74"><path d="M9 8q0-9 6-9h14l6 5h34q7 0 7 8v40H9Z" fill="#5aa5de"/><svg x="9" y="7" width="68" height="68"><use href="#activity"/></svg></svg></div>
    <div class="app dirs"><svg viewBox="0 0 86 74"><use href="#dir" width="86" height="74"/><circle cx="43" cy="41" r="16" fill="#4f9ad6"/><path d="M43 33v15M36 42l7 7 7-7" fill="none" stroke="#85c8f4" stroke-width="2.500"/></svg></div>
    <div class="app"><svg viewBox="0 0 74 74"><path d="M6 5l9-7 6 3 5-7 8 4 8-5 6 6 9-2 4 8 4 9H6Z" fill="#d9dadd"/><path d="M18 2l9 10M40-3l-5 14M50 0l3 10" stroke="#5b5f66" stroke-width="4"/><path d="M30 5l8-3 1 7Z" fill="#3aa0c0"/><path d="M4 6q33 12 66 0L62 71q-3 7-25 7t-25-7Z" fill="url(#g-bin)"/><path d="M22 22q10 14 4 30M52 20q-10 14-3 36M30 60q10-6 16 4" stroke="#c9c7ce" stroke-width="2" fill="none"/></svg></div>
  </div>
</div>
</body>
</html>
```
FILE: styles.css
```css
* { box-sizing: border-box; }
body, h1, h2, p, ul, hr { margin: 0; padding: 0; }
hr { border: 0; }
em, b { font-style: normal; }
svg { display: block; overflow: visible; flex: none; }
.sprite { position: absolute; }
body { width: 3024px; height: 1964px; overflow: hidden; font-family: Inter, "Liberation Sans", sans-serif; }

.desktop {
  position: relative;
  display: flex;
  flex-direction: column;
  height: 1964px;
  background: linear-gradient(90deg, #2a1380 0, #2a1380 28%, #1d1062 34%, #20126b 48%, #330c98 49%, #3a0ba8 60%, #4a10b4 68%, #460cc4 90%, #440bcb 100%);
}
.back-window {
  position: absolute;
  left: 0;
  top: 90px;
  width: 3024px;
  height: 1778px;
  border-radius: 0 0 22px 22px;
  background: linear-gradient(#888 0, #888 1745px, #b9b9b9 1778px);
  box-shadow: 0 14px 50px rgba(0, 0, 0, .6);
}

/* macOS menu bar */
.menubar {
  position: relative;
  display: grid;
  grid-template-columns: 66px 143px 84px 88px 100px 128px 175px 133px 84px 138px 923px 72px 76px 73px 61px 87px 65px 70px 64px 63px 59px 1fr;
  align-items: center;
  height: 74px;
  padding-left: 40px;
  background: linear-gradient(90deg, #e9aed6 0, #e8b5da 20%, #e6cbe4 33%, #e6d4e9 48%, #e6d5ea 68%, #eacbe4 80%, #ecc1df 100%);
  color: #231f24;
  font-size: 26px;
  font-weight: 500;
  letter-spacing: -.6px;
  white-space: pre;
}
.menubar b { font-weight: 700; letter-spacing: .3px; }
.menubar .clock { letter-spacing: .15px; margin-top: -2px; }
.menubar .up { margin-top: -5px; }

/* browser window */
.window {
  position: relative;
  display: flex;
  flex-direction: column;
  height: 1762px;
  margin-top: 2px;
  border-radius: 20px;
  overflow: hidden;
  background: #202124;
  box-shadow: 0 0 0 2px #2a1a2c;
}
.tabstrip {
  display: flex;
  height: 84px;
  padding-left: 42px;
  border-top: 2px solid #8d8d90;
  border-radius: 20px 20px 0 0;
  color: #fff;
}
.lights { display: flex; gap: 16px; width: 145px; padding-top: 29px; }
.lights i { width: 24px; height: 24px; border-radius: 50%; }
.red { background: #ec6a5e; }
.amber { background: #f4bf4f; }
.green { background: #61c554; }
.tabs { display: grid; grid-template-columns: repeat(15, 124px) repeat(6, 122px); height: 68px; margin-top: 14px; }
.tab { position: relative; display: flex; align-items: center; gap: 16px; padding: 0 14px 1px 14px; font-size: 24px; }
.tab::after { content: ""; position: absolute; right: -1px; top: 15px; width: 2px; height: 40px; background: #5b5c60; }
.tab.plain::after, .tab.active::after { display: none; }
.tab svg { width: 32px; height: 32px; }
.tab span { width: 47px; white-space: nowrap; -webkit-mask-image: linear-gradient(90deg, #000 55%, transparent 100%); mask-image: linear-gradient(90deg, #000 55%, transparent 100%); }
.tab.active { margin: 0 -2px 0 -1px; padding-left: 17px; border-radius: 16px 16px 0 0; background: #35363a; }
.tab.active span { width: 6px; -webkit-mask-image: linear-gradient(#000, #000); mask-image: linear-gradient(#000, #000); }
.tab.active .x { width: 22px; height: 22px; margin-left: -3px; }
.tab.active::before { content: ""; position: absolute; left: -16px; right: -16px; bottom: 0; height: 16px; background: radial-gradient(circle at 0 0, transparent 15.5px, #35363a 16px) left / 16px 16px no-repeat, radial-gradient(circle at 100% 0, transparent 15.5px, #35363a 16px) right / 16px 16px no-repeat; }
.white { --land: #202124; }
.white svg { color: #f1f3f4; }
.land { fill: var(--land, #35363a); }
.dim svg { color: #26292d; }
.black svg { color: #000; }
.plus { width: 26px; height: 26px; margin: 35px 0 0 32px; }
.caret { width: 20px; height: 14px; margin: 42px 0 0 133px; }

.toolbar {
  display: grid;
  grid-template-columns: 64px 63px 58px 2084px 30px 62px 64px 65px 65px 64px 53px 239px 1fr;
  align-items: center;
  height: 72px;
  padding-left: 31px;
  background: #35363a;
}
.omnibox { display: flex; align-items: center; height: 56px; padding: 0 20px 0 28px; border-radius: 28px; background: #202124; font-size: 28px; }
.omnibox p { flex: 1; padding-left: 23px; color: #9a9b9e; letter-spacing: -.2px; }
.omnibox b { color: #fff; font-weight: 400; letter-spacing: .08px; }
.honey { position: relative; width: 32px; }
.honey em { position: absolute; left: 20px; top: 19px; width: 24px; height: 25px; border-radius: 4px; background: #93c788; color: #222; font-size: 20px; line-height: 27px; text-align: center; }
.incognito { display: flex; align-items: center; gap: 17px; height: 55px; padding-left: 3px; border: 2px solid #3e3f44; border-radius: 28px; background: #242428; color: #fff; font-size: 28px; letter-spacing: -.75px; }
.incognito svg { margin-left: -2px; }
.dots { display: flex; flex-direction: column; gap: 4px; padding-left: 35px; }
.dots i { width: 6px; height: 6px; border-radius: 50%; background: #f1f3f4; }

.bookmarks {
  display: grid;
  grid-template-columns: 303px 162px 282px 171px 210px 154px 302px 290px 225px 572px 36px 21px 1fr;
  align-items: center;
  height: 66px;
  padding: 0 0 9px 28px;
  border-bottom: 2px solid #5f6064;
  background: #35363a;
  color: #fff;
  font-size: 24px;
  white-space: nowrap;
}
.bookmarks div { display: flex; align-items: center; gap: 16px; letter-spacing: -.04px; }
.bookmarks svg { width: 32px; height: 26px; color: #5f6368; }
.bookmarks .site svg { height: 32px; }
.bookmarks hr { width: 2px; height: 32px; background: #6a6b6f; }

/* console top navigation */
.awsnav {
  display: grid;
  grid-template-columns: 97px 34px 49px 124px 1078px 217px 65px 35px 65px 34px 66px 35px 127px 51px 36px 821px 1fr;
  align-items: center;
  height: 82px;
  padding-left: 36px;
  border-bottom: 2px solid #4f5762;
  background: #262f3e;
  color: #fff;
  font: 500 24px "Noto Sans", "Open Sans", sans-serif;
  letter-spacing: -.4px;
  white-space: nowrap;
}
.awsnav hr { width: 2px; height: 44px; background: #414a57; }
.awsnav .acct { letter-spacing: .18px; }
.aws { font: 500 34px "Noto Sans", sans-serif; fill: #fff; letter-spacing: 0; }
.navsearch { display: flex; align-items: center; height: 60px; padding: 0 16px 0 21px; border: 2px solid #879596; border-radius: 4px; background: #16191f; color: #95a5a6; font-size: 28px; font-weight: 400; }
.navsearch svg { color: #d5dbdb; }
.navsearch em { flex: 1; padding-left: 19px; font-style: italic; letter-spacing: -.13px; }
.navsearch kbd { font: inherit; letter-spacing: .08px; }

/* console body */
.console { display: grid; grid-template-columns: 561px 2382px 81px; height: 1392px; background: #f2f3f3; font: 400 28px/40px "Noto Sans", "Open Sans", sans-serif; letter-spacing: -.42px; color: #16191f; -webkit-text-stroke: .3px; }
.console a { color: #2f72b6; }
.side { border-right: 2px solid #c3c8c9; background: #fff; color: #545b64; }
.side-head { display: flex; align-items: center; justify-content: space-between; height: 120px; padding: 2px 45px 2px 60px; border-bottom: 2px solid #eaeded; }
.side h2 { color: #16191f; font-size: 36px; letter-spacing: -1.02px; }
.side ul { padding: 20px 0 0 60px; list-style: none; }
.side li { height: 62px; line-height: 62px; letter-spacing: -.52px; }
.side .on { color: #dd7833; font-weight: 700; letter-spacing: -1px; }
.flash { display: flex; height: 180px; padding: 29px 35px 0 29px; background: #3071b5; box-shadow: 0 1px 2px 1px #8c979b; color: #fff; }
.flash > svg:first-child { margin-top: 5px; }
.flash > svg:last-child { margin-top: 7px; }
.flash div { flex: 1; padding-left: 20px; white-space: nowrap; }
.flash b { display: block; letter-spacing: -.74px; }
.crumbs { display: flex; align-items: center; height: 40px; margin: 50px 0 33px 78px; color: #687078; }
.crumbs a { width: 240px; letter-spacing: -.34px; }
.crumbs svg { width: 18px; margin-right: 27px; }
.crumbs span { letter-spacing: -.55px; }
.card { width: 2225px; margin-left: 79px; border-top: 2px solid #eaeded; background: #fff; box-shadow: 0 2px 2px #8b959b, 1px 0 2px #c8cdce, -1px 0 2px #c8cdce; }
.card-head { display: grid; grid-template-columns: 1361px 81px 260px 442px; align-items: center; padding: 44px 0 43px 40px; background: #fafafa; }
h1 { padding-top: 2px; font-size: 56px; font-weight: 400; line-height: 59px; letter-spacing: -.84px; -webkit-text-stroke: .6px; }
button { height: 61px; border: 0; border-radius: 4px; font: 700 28px "Noto Sans", sans-serif; letter-spacing: -.55px; }
.actions { display: flex; align-items: center; gap: 23px; width: 225px; padding-left: 39px; border: 2px solid #d5dbdb; background: #fff; color: #aab7b8; letter-spacing: -.34px; }
.create { background: #dd7933; color: #fff; }
.filter-row { display: flex; align-items: center; height: 94px; padding: 0 42px 32px 40px; border-bottom: 2px solid #eaeded; background: #fafafa; }
.filter { display: flex; align-items: center; width: 1456px; height: 61px; padding-left: 19px; border: 2px solid #aab7b8; border-radius: 4px; background: #fff; box-shadow: inset 0 2px 6px #e4e8e8; color: #687078; }
.filter em { padding-left: 18px; color: #aab7b8; font-style: italic; letter-spacing: .07px; }
.pager { display: grid; grid-template-columns: 62px 58px 50px 35px 36px; align-items: center; margin-left: auto; }
.pager hr { width: 2px; height: 60px; background: #eaeded; }
.grid { display: grid; grid-template-columns: 34px 284px 202px 266px 214px 233px 467px 291px 231px; }
.grid > div { display: flex; align-items: center; }
.head { height: 138px; padding: 34px 0; border-bottom: 2px solid #eaeded; background: #fafafa; color: #545b64; font-weight: 700; letter-spacing: -.75px; }
.head > div { justify-content: space-between; height: 68px; padding: 0 38px 0 40px; border-right: 2px solid #eaeded; }
.head > div:first-child { padding: 0; }
.head span { width: 0; flex: 1; }
.head svg { width: 20px; height: 16px; color: #879596; }
.head > div:nth-child(2) svg, .head > div:nth-child(4) svg, .head > div:nth-child(5) svg, .head > div:nth-child(6) svg, .head > div:nth-child(8) svg { margin-top: 40px; }
.head .sorted { color: #16191f; letter-spacing: -.92px; }
.head .asc { color: #16191f; transform: rotate(180deg); }
.row { padding: 9px 0 10px; }
.row > div { padding-left: 38px; white-space: nowrap; letter-spacing: -.25px; }
.row > .num { letter-spacing: .35px; }
.row > .ver { letter-spacing: .55px; }
.row .wide { letter-spacing: .2px; }
.row > div:nth-child(7), .row > div:nth-child(9) { letter-spacing: -.42px; }
mark { height: 40px; padding: 0 15px; border-radius: 20px; background: #3c7f22; color: #fff; font-size: 24px; line-height: 41px; letter-spacing: 0; }
.help { padding: 24px 0 0 23px; border-left: 2px solid #c3c8c9; background: #fff; color: #545b64; }
.side-head svg, .help svg { color: #545b64; }

.foot {
  display: grid;
  grid-template-columns: 152px 547px 181px 1004px 609px 128px 116px 1fr;
  align-items: center;
  height: 66px;
  padding: 0 0 2px 40px;
  border-top: 2px solid #545b64;
  background: linear-gradient(#262f3e, #212a35);
  color: #fff;
  font: 500 24px "Noto Sans", "Open Sans", sans-serif;
  letter-spacing: -.5px;
  white-space: nowrap;
}
.foot .mute { color: #a3afb0; letter-spacing: -.55px; }
.foot .cookie { padding-top: 5px; letter-spacing: -.78px; }

/* dock */
.dock {
  position: relative;
  display: flex;
  align-self: center;
  width: 2596px;
  height: 114px;
  margin-top: 2px;
  padding: 15px 4px 0;
  border: 2px solid rgba(205, 175, 245, .55);
  border-radius: 36px;
  background: linear-gradient(90deg, #8168bd 0, #7a6cb8 25%, #7b69c0 38%, #8762d8 50%, #8e5fdd 58%, #a75fe0 65%, #a25bdf 82%, #955fe2 100%);
}
.app { position: relative; display: flex; justify-content: center; width: 96px; }
.app > svg { width: 74px; height: 74px; }
.app.dirs > svg { width: 86px; }
.run::after { content: ""; position: absolute; left: 44px; top: 85px; width: 8px; height: 8px; border-radius: 50%; background: #15025c; }
.app em { position: absolute; left: 60px; top: -9px; width: 34px; height: 34px; border-radius: 50%; background: #e2544b; color: #fff; font-size: 22px; line-height: 34px; text-align: center; letter-spacing: -.5px; }
.dock hr { width: 2px; height: 82px; margin: -2px 21px 0; background: #5e34a5; }
.w { font: 700 22px Inter, sans-serif; fill: #fff; }
```
